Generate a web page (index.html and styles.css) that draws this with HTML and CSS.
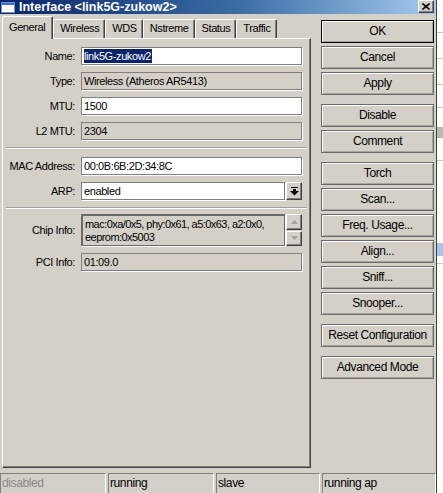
FILE: index.html
```html
<!DOCTYPE html>
<html>
	<head>
		<meta charset="UTF-8">
		<title>Interface &lt;link5G-zukow2&gt;</title>
		<link rel="stylesheet" href="styles.css">
	</head>
	<body>
		<div class="window">
			<div class="titlebar">
				<svg class="app-icon" width="14" height="11" viewBox="0 0 14 11">
					<rect x="0.5" y="0.5" width="13" height="10" fill="#fff" stroke="#6d8fd0"/>
					<rect x="1" y="1" width="12" height="2" fill="#3a6ad0"/>
				</svg>
				<span class="title">Interface &lt;link5G-zukow2&gt;</span>
				<span class="close">
					<svg width="8" height="7" viewBox="0 0 8 7">
						<path d="M0.5 0.5 L7.5 6.5 M7.5 0.5 L0.5 6.5" stroke="#000" stroke-width="1.6"/>
					</svg>
				</span>
			</div>

			<div class="content">
				<div class="left">
					<ul class="tabs">
						<li class="tab active">General</li>
						<li class="tab">Wireless</li>
						<li class="tab">WDS</li>
						<li class="tab">Nstreme</li>
						<li class="tab">Status</li>
						<li class="tab">Traffic</li>
					</ul>

					<div class="panel">
						<div class="row">
							<label>Name:</label>
							<div class="field edit"><span class="sel">link5G-zukow2</span></div>
						</div>
						<div class="row">
							<label>Type:</label>
							<div class="field">Wireless (Atheros AR5413)</div>
						</div>
						<div class="row">
							<label>MTU:</label>
							<div class="field edit">1500</div>
						</div>
						<div class="row">
							<label>L2 MTU:</label>
							<div class="field">2304</div>
						</div>

						<div class="sep"></div>

						<div class="row">
							<label>MAC Address:</label>
							<div class="field edit">00:0B:6B:2D:34:8C</div>
						</div>
						<div class="row">
							<label>ARP:</label>
							<div class="field edit short">enabled</div>
							<span class="drop">
								<svg width="9" height="9" viewBox="0 0 9 9">
									<rect x="1" y="0" width="7" height="1" fill="#000"/>
									<rect x="3" y="2" width="3" height="2" fill="#000"/>
									<polygon points="0,4 9,4 4.5,8.5" fill="#000"/>
								</svg>
							</span>
						</div>

						<div class="sep sep2"></div>

						<div class="row tall">
							<label>Chip Info:</label>
							<div class="field short multi">mac:0xa/0x5, phy:0x61, a5:0x63, a2:0x0,<br>eeprom:0x5003</div>
							<div class="scroll">
								<span class="arrow">
									<svg width="7" height="4" viewBox="0 0 7 4"><polygon points="0,4 7,4 3.5,0" fill="#a0a0a0"/></svg>
								</span>
								<span class="arrow">
									<svg width="7" height="4" viewBox="0 0 7 4"><polygon points="0,0 7,0 3.5,4" fill="#a0a0a0"/></svg>
								</span>
							</div>
						</div>
						<div class="row">
							<label>PCI Info:</label>
							<div class="field">01:09.0</div>
						</div>
					</div>
				</div>

				<div class="buttons">
					<div class="btn default">OK</div>
					<div class="btn">Cancel</div>
					<div class="btn">Apply</div>
					<div class="btn group">Disable</div>
					<div class="btn">Comment</div>
					<div class="btn group">Torch</div>
					<div class="btn">Scan...</div>
					<div class="btn">Freq. Usage...</div>
					<div class="btn">Align...</div>
					<div class="btn">Sniff...</div>
					<div class="btn">Snooper...</div>
					<div class="btn group">Reset Configuration</div>
					<div class="btn group">Advanced Mode</div>
				</div>
			</div>

			<div class="statusbar">
				<div class="cell off">disabled</div>
				<div class="cell">running</div>
				<div class="cell">slave</div>
				<div class="cell">running ap</div>
			</div>
		</div>
		<div class="backdrop"></div>
	</body>
</html>
```

FILE: styles.css
```css
* {
	margin: 0;
	padding: 0;
	box-sizing: border-box;
}
ul, li {
	list-style: none;
}

body {
	width: 443px;
	height: 493px;
	overflow: hidden;
	display: flex;
	background: #d4d0c8;
	font-family: "Liberation Sans", Arial, sans-serif;
	font-size: 11px;
	letter-spacing: -0.4px;
	color: #000;
}

.window {
	width: 437px;
	height: 493px;
	display: flex;
	flex-direction: column;
	border-right: 1px solid #404040;
}

/* title bar */
.titlebar {
	height: 14px;
	display: flex;
	align-items: center;
	padding-left: 1px;
	background: linear-gradient(to right, #0a246a, #3a6ea5 55%, #a6caf0);
}
.app-icon {
	margin-right: 4px;
}
.title {
	color: #fff;
	font-weight: bold;
	font-size: 12.5px;
	letter-spacing: 0;
}
.close {
	margin-left: auto;
	margin-right: 2px;
	width: 16px;
	height: 13px;
	margin-top: -1px;
	display: flex;
	align-items: center;
	justify-content: center;
	background: #d4d0c8;
	border: 1px solid;
	border-color: #fff #404040 #404040 #fff;
	box-shadow: inset -1px -1px 0 #808080;
}

.content {
	flex: 1;
	display: flex;
	padding-bottom: 5px;
}

/* tabs + page */
.left {
	margin-left: 2px;
	width: 309px;
	display: flex;
	flex-direction: column;
	padding-top: 2px;
}
.tabs {
	height: 22px;
	display: flex;
	align-items: flex-end;
	position: relative;
	z-index: 1;
}
.tab {
	height: 19px;
	padding: 0 5px 0 6px;
	line-height: 17px;
	border: 1px solid;
	border-bottom: none;
	border-color: #fff #404040 transparent #fff;
	box-shadow: inset -1px 0 0 #808080;
	border-radius: 2px 2px 0 0;
}
.tab.active {
	height: 23px;
	margin-bottom: -1px;
	padding: 0 7px 0 6px;
	line-height: 20px;
	background: #d4d0c8;
}

.panel {
	flex: 1;
	padding-top: 8px;
	border: 1px solid;
	border-color: #fff #404040 #404040 #fff;
	box-shadow: inset -1px -1px 0 #808080;
}

.row {
	height: 18px;
	margin-bottom: 7px;
	display: flex;
	align-items: center;
}
.row.tall {
	height: 32px;
	margin-bottom: 7px;
	align-items: stretch;
}
.row label {
	width: 72px;
	margin-right: 6px;
	text-align: right;
	align-self: center;
}

.field {
	width: 221px;
	height: 18px;
	line-height: 16px;
	padding-left: 2px;
	border: 1px solid #7f7f7f;
	box-shadow: 1px 1px 0 #fff;
	background: #d4d0c8;
	white-space: nowrap;
	overflow: hidden;
}
.field.edit {
	background: #fff;
}
.field.short {
	width: 204px;
}
.field.multi {
	height: 32px;
	line-height: 13px;
	padding-top: 2px;
	letter-spacing: -0.55px;
	border-color: #6a6a6a;
	border-width: 2px 1px 1px 2px;
}
.sel {
	background: #0a246a;
	color: #fff;
	padding: 1px 1px 1px 0;
}

.drop {
	width: 16px;
	height: 18px;
	margin-left: 1px;
	display: flex;
	align-items: center;
	justify-content: center;
	border: 1px solid;
	border-color: #fff #404040 #404040 #fff;
	box-shadow: inset -1px -1px 0 #808080;
}
.scroll {
	margin-left: 1px;
	display: flex;
	flex-direction: column;
	gap: 1px;
}
.arrow {
	width: 16px;
	flex: 1;
	display: flex;
	align-items: center;
	justify-content: center;
	border: 1px solid;
	border-color: #fff #404040 #404040 #fff;
	box-shadow: inset -1px -1px 0 #808080;
}

.sep {
	margin: 0 3px 8px;
	border-top: 1px solid #a0a0a0;
	border-bottom: 1px solid #fff;
}
.sep2 {
	margin-top: 3px;
	margin-bottom: 5px;
}

/* command buttons */
.buttons {
	margin-left: 10px;
	padding-top: 6px;
	width: 113px;
	display: flex;
	flex-direction: column;
	gap: 3px;
}
.btn {
	height: 23px;
	line-height: 21px;
	text-align: center;
	font-size: 12px;
	border: 1px solid #6a6a6a;
	box-shadow: inset 1px 1px 0 #fff, inset -1px -1px 0 #a8a5a0;
}
.btn.default {
	border-color: #000;
}
.btn.group {
	margin-top: 6px;
}

/* status bar */
.statusbar {
	height: 20px;
	display: grid;
	grid-template-columns: 106px 106px 104px 1fr;
	column-gap: 2px;
}
.cell {
	line-height: 19px;
	padding-left: 1px;
	font-size: 12px;
	border: 1px solid;
	border-color: #808080 #fff #fff #808080;
}
.cell.off {
	color: #8a8a8a;
}

.backdrop {
	flex: 1;
	background:
		linear-gradient(#c8c8c8, #c8c8c8) 0 32px / 100% 1px no-repeat,
		linear-gradient(#c8c8c8, #c8c8c8) 0 58px / 100% 1px no-repeat,
		linear-gradient(#c8c8c8, #c8c8c8) 0 84px / 100% 1px no-repeat,
		linear-gradient(#c8c8c8, #c8c8c8) 0 107px / 100% 1px no-repeat,
		linear-gradient(#b8b8b8, #b8b8b8) 0 127px / 100% 11px no-repeat,
		linear-gradient(#c8c8c8, #c8c8c8) 0 160px / 100% 1px no-repeat,
		linear-gradient(#a9c4e8, #a9c4e8) 0 243px / 100% 13px no-repeat,
		linear-gradient(#c8c8c8, #c8c8c8) 0 263px / 100% 1px no-repeat,
		#fff;
}
```
